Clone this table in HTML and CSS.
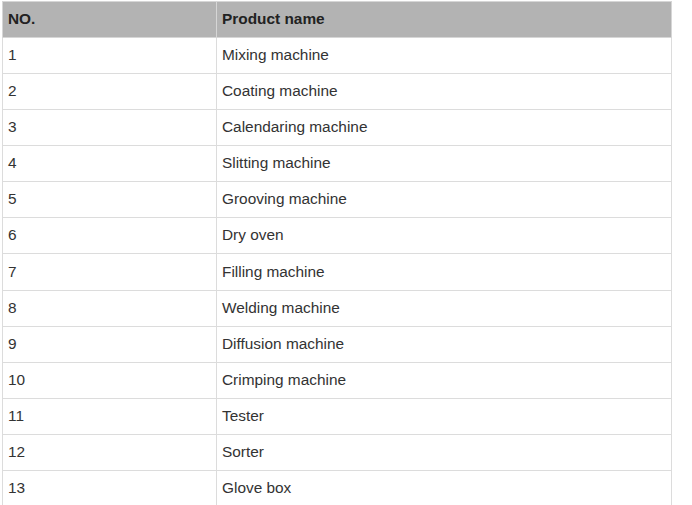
FILE: index.html
```html
<!DOCTYPE html>
<html>
<head>
<meta charset="utf-8">
<link rel="stylesheet" href="styles.css">
</head>
<body>
<table class="products">
  <thead>
    <tr><th class="no">NO.</th><th>Product name</th></tr>
  </thead>
  <tbody>
    <tr><td>1</td><td>Mixing machine</td></tr>
    <tr><td>2</td><td>Coating machine</td></tr>
    <tr><td>3</td><td>Calendaring machine</td></tr>
    <tr><td>4</td><td>Slitting machine</td></tr>
    <tr><td>5</td><td>Grooving machine</td></tr>
    <tr><td>6</td><td>Dry oven</td></tr>
    <tr><td>7</td><td>Filling machine</td></tr>
    <tr><td>8</td><td>Welding machine</td></tr>
    <tr><td>9</td><td>Diffusion machine</td></tr>
    <tr><td>10</td><td>Crimping machine</td></tr>
    <tr><td>11</td><td>Tester</td></tr>
    <tr><td>12</td><td>Sorter</td></tr>
    <tr><td>13</td><td>Glove box</td></tr>
  </tbody>
</table>
</body>
</html>
```
FILE: styles.css
```css
html, body {
  margin: 0;
  padding: 0;
  background: #fff;
}
body {
  padding: 1px 0 0 2px;
  font-family: "Liberation Sans", Arial, sans-serif;
  font-size: 15.4px;
  color: #333;
}
.products {
  border-collapse: collapse;
  width: 670px;
  table-layout: fixed;
}
.products th,
.products td {
  border: 1px solid #dcdcdc;
  height: 36.17px;
  padding: 0 0 1px 5px;
  text-align: left;
  vertical-align: middle;
  box-sizing: border-box;
}
.products th {
  height: 35.5px;
  background: #b3b3b3;
  font-weight: bold;
  color: #222;
  border-color: #d6d6d6;
}
.products .no {
  width: 214px;
}
```
